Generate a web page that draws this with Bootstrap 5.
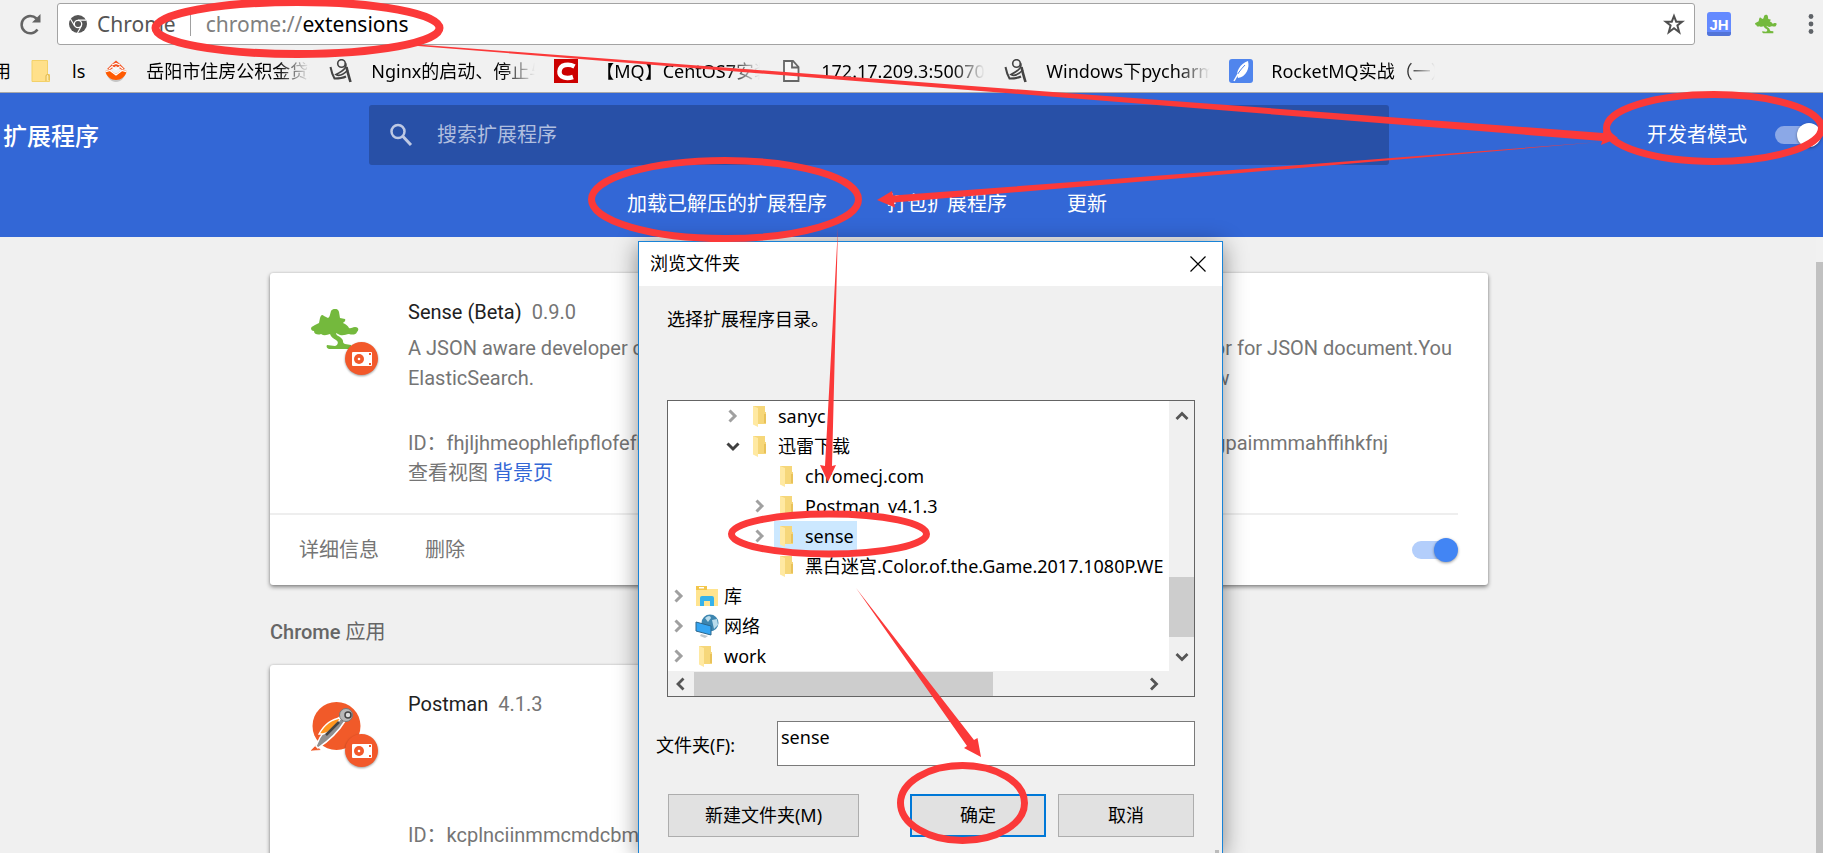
<!DOCTYPE html>
<html lang="zh-CN">
<head>
<meta charset="utf-8">
<meta name="viewport" content="width=device-width, initial-scale=1">
<title>扩展程序</title>
<link href="https://cdn.jsdelivr.net/npm/bootstrap@5.3.0/dist/css/bootstrap.min.css" rel="stylesheet">
<style>
  body { font-family: "Noto Sans", "Noto Sans CJK SC", sans-serif; font-size: 18px; line-height: 30px; background: #f0f0f0; color: #000; }
  button { font: inherit; }
  svg { display: block; flex: none; }
  .page { font-family: Roboto, "Noto Sans CJK SC", sans-serif; font-size: 20px; }

  /* browser chrome */
  .chrome-bar { background: #f1f1f1; border-bottom: 1px solid #a9a9a9; height: 93px; }
  .address-row { height: 48px; padding: 3px 0 3px 18px; }
  .omnibox { height: 42px; border: 1px solid #a3a3a3; border-radius: 3px; background: #fff; font-size: 21px; margin-left: 15px; padding: 0 9px 0 11px; }
  .omnibox .app-name { color: #555; margin-left: 10px; }
  .omnibox .rule { width: 1px; height: 24px; background: #a0a0a0; margin: 0 15px 0 14px; }
  .omnibox label { color: #808080; }
  .omnibox input { border: 0; padding: 0; outline: 0; min-width: 0; color: #000; }
  .ext-icons { padding-left: 12px; gap: 24px; }
  .bookmarks { height: 44px; gap: 19px; padding-top: 2px; white-space: nowrap; overflow: hidden; }
  .bookmark { display: flex; align-items: center; gap: 18px; color: #000; text-decoration: none; flex: none; }
  .bookmark .title { width: 164px; overflow: hidden; -webkit-mask-image: linear-gradient(90deg, #000 80%, transparent); mask-image: linear-gradient(90deg, #000 80%, transparent); }
  .bookmark-folder { gap: 20px; }
  .bookmark-folder .cut { margin-left: -7px; }
  .bookmark-folder .bookmark { gap: 21px; }

  /* extensions header */
  .ext-header { background: #3367d6; height: 144px; padding-top: 12px; color: #fff; }
  .ext-title { font-size: 24px; width: 369px; padding: 4px 0 0 3px; margin: 0; }
  .search-box { height: 60px; background: #2850a7; border-radius: 3px; padding-left: 20px; }
  .search-box input { background: none; border: 0; outline: 0; color: #fff; padding: 0 0 0 24px; }
  .search-box input::placeholder { color: #b0bedf; opacity: 1; }
  .dev-mode { width: 434px; gap: 28px; padding-right: 2px; }
  .tool-links { height: 72px; gap: 60px; padding: 6px 89px 0 0; }
  .text-btn { background: none; border: 0; padding: 0; color: inherit; }

  .toggle { appearance: none; width: 46px; height: 24px; margin: 0; position: relative; flex: none; }
  .toggle::before { content: ""; position: absolute; left: 0; top: 3px; width: 40px; height: 18px; border-radius: 9px; background: #b3cefb; }
  .toggle::after { content: ""; position: absolute; right: 0; top: 0; width: 24px; height: 24px; border-radius: 50%; background: #4285f4; box-shadow: 0 1px 3px rgba(0,0,0,.4); }
  .toggle-light::before { background: #8ba8e7; }
  .toggle-light::after { background: #fff; }

  /* extension cards */
  .ext-list { padding: 36px 335px 0 270px; color: #757575; }
  .ext-card { background: #fff; border-radius: 3px; height: 312px; box-shadow: 0 2px 4px rgba(0,0,0,.45), 0 0 2px rgba(0,0,0,.15); }
  .cards { gap: 18px; }
  .ext-info { height: 240px; padding: 24px 36px 0 36px; gap: 30px; }
  .ext-logo { width: 72px; padding: 12px 0 0 5px; }
  .ext-logo .badge-icon { left: 39px; top: 45px; filter: drop-shadow(0 1px 1px rgba(0,0,0,.4)); }
  .ext-head { gap: 10px; }
  .ext-name { color: #212121; font-size: 20px; line-height: 30px; margin: 0; font-weight: 400; }
  .ext-desc { height: 95px; margin: 6px 0 0; }
  .ext-link { color: #3367d6; }
  .ext-foot { border-top: 2px solid #eee; height: 72px; margin-right: 30px; padding-left: 29px; gap: 46px; }
  .section-title { font-size: 20px; line-height: 30px; font-weight: 500; color: #666; margin: 32px 0 18px; }
  .section-title span { font-weight: 400; }
  .page-scroll { right: 0; top: 237px; bottom: 0; width: 7px; background: #f1f1f1; padding-top: 25px; }
  .page-scroll div { background: #c1c1c1; height: 100%; }

  /* folder dialog */
  .folder-dialog { left: 638px; top: 241px; width: 585px; bottom: 0; border: 1px solid #1883d7; border-bottom: 0; background: #f0f0f0; box-shadow: 0 4px 22px rgba(0,0,0,.45); }
  .dlg-title { background: #fff; height: 44px; padding: 0 16px 0 11px; }
  .dlg-title h2 { font-size: 18px; margin: 0; font-weight: 400; }
  .dlg-body { padding: 18px 27px 0 28px; }
  .dlg-body p { height: 96px; margin: 0; }
  .tree-box { border: 1px solid #646464; background: #fff; }
  .tree { height: 270px; overflow: hidden; padding: 0; margin: 0; list-style: none; min-width: 0; }
  .tree li { display: flex; align-items: center; height: 30px; padding-left: 4px; white-space: nowrap; }
  .tree li.lv3 { padding-left: 58px; }
  .tree li.lv4 { padding-left: 85px; }
  .tree .twist { width: 14px; height: 14px; margin-right: 7px; flex: none; }
  .tree .node { display: flex; align-items: center; gap: 5px; padding: 0 3px 0 2px; height: 30px; }
  .tree .picked { background: #cce8ff; }
  .vscroll { width: 25px; background: #f0f0f0; height: 270px; padding: 9px 0 8px; }
  .vscroll .thumb { width: 100%; height: 60px; margin-top: auto; margin-bottom: 14px; background: #cdcdcd; }
  .hscroll { height: 25px; background: #f0f0f0; padding: 0 34px 0 6px; }
  .hscroll .thumb { width: 299px; height: 24px; margin-left: 6px; background: #cdcdcd; }
  .folder-row { margin: 24px 0 28px -11px; }
  .folder-row label { padding-top: 2px; }
  .folder-row input { width: 418px; height: 45px; border: 1px solid #7a7a7a; padding: 0 3px 14px; outline: 0; }
  .dlg-buttons { gap: 12px; padding: 0 1px; }
  .win-btn { height: 43px; width: 136px; background: #e1e1e1; border: 1px solid #adadad; padding: 0 0 2px; }
  .win-btn.wide { width: 191px; margin-right: auto; }
  .win-btn.primary { border: 2px solid #0078d7; }
  .grip { right: 3px; bottom: 0; width: 4px; height: 3px; background: #bbb; }
  .marks { left: 0; top: 0; pointer-events: none; }
</style>
</head>
<body>
<svg width="0" height="0" class="position-absolute" aria-hidden="true">
  <defs>
    <symbol id="folder" viewBox="0 0 24 24"><path d="M4 2h12v6h1v12H4z" fill="#f6d77a"/><path d="M4 2l5 2v19l-5-2.500z" fill="#ffe9a2"/><path d="M15 10h2v9h-2z" fill="#e9c25a"/></symbol>
    <symbol id="chev" viewBox="0 0 14 14"><path d="M3.500 1.500l5.500 5.500l-5.500 5.500" fill="none" stroke="#a0a0a0" stroke-width="3"/></symbol>
    <symbol id="bonsai" viewBox="0 0 48 40"><path fill="#74b93d" d="M0 19C1 17 3 17 4 16L8 14L9 9C10 6 11 5 13 7L17 9C19 8 19 5 20 2C22-1 27-1 28 3L29 9L34 10C35 12 33 13 32 14C35 15 37 17 38 19C40 20 41 18 44 18C48 18 48 21 46 23C45 26 41 26 38 25C35 25 33 27 29 26L25 24C25 27 29 27 31 30C33 32 31 34 34 35L40 36V40H18C16 39 15 38 16 36L24 37C27 36 28 33 25 31C22 29 20 28 19 25C16 26 13 27 10 25C8 26 3 26 3 22C1 22 0 21 0 19Z"/></symbol>
    <symbol id="appbadge" viewBox="0 0 33 33"><circle cx="16.500" cy="16.500" r="16.500" fill="#f2582a"/><rect x="7" y="10" width="20" height="14" rx="1" fill="#fff"/><circle cx="14" cy="17" r="5" fill="#f2582a"/><circle cx="14" cy="17" r="1.300" fill="#fff"/><path d="M24 11h2v2h-2zM24 21h2v2h-2z" fill="#f2582a"/></symbol>
    <symbol id="scribble" viewBox="0 0 24 24"><g fill="none" stroke="#444"><circle cx="12.500" cy="4.500" r="3.800" stroke-width="1.600"/><path d="M16.500 4C18 8 16 11 7 15.500C11 18 16 14 19 11" stroke-width="1.700"/><path d="M1.500 8C2.500 13 4 17 5.500 19.500C9 19.500 14 19 17 17.500" stroke-width="2"/><path d="M17.500 8C18.500 13 20 18 21.500 23" stroke-width="2.600"/></g></symbol>
  </defs>
</svg>

<div class="position-relative vh-100 overflow-hidden d-flex flex-column">
  <header class="chrome-bar flex-shrink-0">
    <div class="address-row d-flex align-items-center">
      <button class="text-btn" aria-label="重新加载"><svg width="24" height="24" viewBox="0 0 24 24"><path d="M19.500 17.500A8.700 8.700 0 1 1 18.500 6.500" fill="none" stroke="#646464" stroke-width="2.500"/><path d="M22.500 2v8.500H14z" fill="#646464"/></svg></button>
      <div class="omnibox d-flex align-items-center flex-fill">
        <svg width="18" height="18" viewBox="0 0 18 18"><circle cx="9" cy="9" r="9" fill="#555"/><circle cx="9" cy="9" r="3.700" fill="none" stroke="#fff" stroke-width="1.300"/><path d="M9 5.200h8M5.700 11L1.500 4M12.300 11L8.500 18" stroke="#fff" stroke-width="1.200" fill="none"/></svg>
        <span class="app-name">Chrome</span>
        <span class="rule"></span>
        <label for="url">chrome://</label>
        <input id="url" class="flex-fill" value="extensions">
        <svg width="22" height="22" viewBox="0 0 22 22"><path d="M11 3l2.200 5.700h6l-4.800 3.800l1.800 6.700L11 15.200l-5.200 4l1.800-6.700L2.800 8.700h6z" fill="none" stroke="#4f4f4f" stroke-width="2"/></svg>
      </div>
      <div class="ext-icons d-flex align-items-center">
        <svg width="24" height="24" viewBox="0 0 24 24"><rect width="24" height="24" rx="3" fill="#648aff"/><path d="M0 20h24v1a3 3 0 0 1-3 3H3a3 3 0 0 1-3-3z" fill="#5274d8"/><text x="12" y="18" text-anchor="middle" font-family="Liberation Sans" font-weight="700" font-size="15" fill="#fff">JH</text></svg>
        <svg width="22" height="20"><use href="#bonsai"/></svg>
        <button class="text-btn" aria-label="菜单"><svg width="22" height="24" viewBox="0 0 22 24"><g fill="#5f6368"><circle cx="10" cy="4.500" r="2.400"/><circle cx="10" cy="12" r="2.400"/><circle cx="10" cy="19.500" r="2.400"/></g></svg></button>
      </div>
    </div>
    <nav class="bookmarks d-flex align-items-center" aria-label="书签">
      <div class="d-flex align-items-center bookmark-folder">
        <a class="bookmark cut" href="#">用</a>
        <a class="bookmark" href="#"><svg width="20" height="22" viewBox="0 0 20 22"><path d="M1 .500h15.500v14h2v7H1z" fill="#ffe08a" stroke="#f3d169"/><path d="M15 21v-5q0-1.500 1.500-1.500T18 16v4" fill="#ffe9a8" stroke="#dfb649"/></svg>ls</a>
      </div>
      <a class="bookmark" href="#"><svg width="24" height="24" viewBox="0 0 24 24"><path d="M2 14l4 1 6 4 6-4 4-1c-2 5-5 9-10 9S4 19 2 14z" fill="#999" opacity=".5"/><path d="M1 12l5-1 6 4 6-4 5 1c-2 6-6 9-11 9S3 18 1 12z" fill="#ff5a00"/><path d="M12 1.500l4 3.500 5 5-3 1-6-4-6 4-3-1 5-5z" fill="#f4511e"/><path d="M1 13l5-1.500 6 4.500 6-4.500 5 1.500M5 10l3-2.500 4 3 4-3 3 2.500M8 6l4-1.500L16 6" stroke="#fff" stroke-width="1.200" fill="none"/></svg><span class="title">岳阳市住房公积金贷款</span></a>
      <a class="bookmark" href="#"><svg width="24" height="24"><use href="#scribble"/></svg><span class="title">Nginx的启动、停止与重启</span></a>
      <a class="bookmark" href="#"><svg width="24" height="24" viewBox="0 0 24 24"><path d="M0 0h24v24H0z" fill="#c00"/><path d="M20.500 7.500C15 4.500 6 5 5.500 12.500C5 19 13 20 19 18" fill="none" stroke="#fff" stroke-width="4.500"/></svg><span class="title">【MQ】CentOS7安装</span></a>
      <a class="bookmark" href="#"><svg width="24" height="24" viewBox="0 0 24 24"><path d="M5 2h9l5.500 6v14H5zM13 2v6.500h6.500" fill="#f8f8f8" stroke="#666" stroke-width="1.800"/></svg><span class="title">172.17.209.3:50070</span></a>
      <a class="bookmark" href="#"><svg width="24" height="24"><use href="#scribble"/></svg><span class="title">Windows下pycharm</span></a>
      <a class="bookmark" href="#"><svg width="24" height="24" viewBox="0 0 24 24"><rect width="24" height="24" rx="3" fill="#5085ed"/><path d="M19 2c2 7-2 16-10 17C6 13 11 5 19 2z" fill="#fff"/><path d="M5 22c2-5 6-11 11-16" stroke="#5085ed" fill="none"/><path d="M5 22l4-7" stroke="#fff" stroke-width="1.500"/></svg><span class="title">RocketMQ实战（一）</span></a>
    </nav>
  </header>

  <div class="page flex-fill">
    <div class="ext-header">
      <div class="d-flex align-items-center">
        <h1 class="ext-title">扩展程序</h1>
        <div class="search-box d-flex align-items-center flex-fill">
          <svg width="24" height="24" viewBox="0 0 24 24"><circle cx="9" cy="8.500" r="6.500" fill="none" stroke="#bec9e4" stroke-width="2.500"/><path d="M13.500 13l8.500 9" stroke="#bec9e4" stroke-width="3"/></svg>
          <input class="flex-fill" type="search" placeholder="搜索扩展程序" aria-label="搜索扩展程序">
        </div>
        <div class="dev-mode d-flex align-items-center justify-content-end">
          <label for="dev">开发者模式</label><input id="dev" class="toggle toggle-light" type="checkbox" checked>
        </div>
      </div>
      <div class="tool-links d-flex align-items-center justify-content-center">
        <button class="text-btn">加载已解压的扩展程序</button><button class="text-btn">打包扩展程序</button><button class="text-btn">更新</button>
      </div>
    </div>

    <main class="ext-list">
      <div class="cards d-flex">
        <article class="ext-card flex-fill w-50">
          <div class="ext-info d-flex">
            <div class="ext-logo position-relative flex-shrink-0">
              <svg width="48" height="40"><use href="#bonsai"/></svg>
              <svg class="badge-icon position-absolute" width="33" height="33"><use href="#appbadge"/></svg>
            </div>
            <div>
              <div class="d-flex ext-head"><h2 class="ext-name">Sense (Beta)</h2><span>0.9.0</span></div>
              <p class="ext-desc">A JSON aware developer console to ElasticSearch.</p>
              <div>ID：fhjljhmeophlefipflofefbjmdlpaocc</div>
              <div>查看视图 <a href="#" class="ext-link text-decoration-none">背景页</a></div>
            </div>
          </div>
          <div class="ext-foot d-flex align-items-center"><button class="text-btn">详细信息</button><button class="text-btn">删除</button></div>
        </article>
        <article class="ext-card flex-fill w-50">
          <div class="ext-info d-flex">
            <div class="ext-logo flex-shrink-0"></div>
            <div>
              <h2 class="ext-name">JSON-handle</h2>
              <p class="ext-desc text-nowrap">It's a browser and editor for JSON document.You<br>can get a beautiful view</p>
              <div>ID：iahnhfdhidomcpggpaimmmahffihkfnj</div>
            </div>
          </div>
          <div class="ext-foot d-flex align-items-center"><input class="toggle ms-auto" type="checkbox" checked aria-label="启用"></div>
        </article>
      </div>
      <h2 class="section-title">Chrome <span>应用</span></h2>
      <div class="cards d-flex">
        <article class="ext-card w-50">
          <div class="ext-info d-flex">
            <div class="ext-logo position-relative flex-shrink-0">
              <svg width="54" height="54" viewBox="2 1 54 54"><circle cx="27.500" cy="26" r="24" fill="#f15a29"/><path d="M1 51l6-6 5 5z" fill="#f15a29" stroke="#fff" stroke-width=".500"/><path d="M7 46C11 35 20 24 32 16l4 5C28 34 18 42 9 48z" fill="#8f8f8f" stroke="#fff" stroke-width="1.500"/><path d="M10 34C15 25 22 19 32 18C27 26 20 33 14 34z" fill="#ff951e" stroke="#fff" stroke-width="1.300"/><path d="M17 35L30 22" stroke="#444" stroke-width="2.500"/><circle cx="37" cy="15" r="6.500" fill="#b8b8b8" stroke="#777"/><circle cx="39" cy="15" r="3" fill="#ddd" stroke="#444" stroke-width="1.500"/></svg>
              <svg class="badge-icon position-absolute" width="33" height="33"><use href="#appbadge"/></svg>
            </div>
            <div>
              <div class="d-flex ext-head"><h2 class="ext-name">Postman</h2><span>4.1.3</span></div>
              <p class="ext-desc"></p>
              <div>ID：kcplnciinmmcmdcbmgaapbalehhoaaoo</div>
            </div>
          </div>
        </article>
      </div>
    </main>
  </div>
  <div class="page-scroll position-absolute"><div></div></div>

  <section class="folder-dialog position-absolute" role="dialog" aria-labelledby="dlgTitle">
    <div class="dlg-title d-flex align-items-center justify-content-between">
      <h2 id="dlgTitle">浏览文件夹</h2>
      <button class="text-btn" aria-label="关闭"><svg width="16" height="16" viewBox="0 0 16 16"><path d="M.5.5l15 15M15.500.5l-15 15" stroke="#000" stroke-width="1.200"/></svg></button>
    </div>
    <div class="dlg-body">
      <p>选择扩展程序目录。</p>
      <div class="tree-box">
        <div class="d-flex">
          <ul class="tree flex-fill">
            <li class="lv3"><svg class="twist"><use href="#chev"/></svg><span class="node"><svg width="24" height="24"><use href="#folder"/></svg>sanyc</span></li>
            <li class="lv3"><svg class="twist" viewBox="0 0 14 14"><path d="M1.500 4.500L7 10l5.500-5.500" fill="none" stroke="#404040" stroke-width="3"/></svg><span class="node"><svg width="24" height="24"><use href="#folder"/></svg>迅雷下载</span></li>
            <li class="lv4"><span class="twist"></span><span class="node"><svg width="24" height="24"><use href="#folder"/></svg>chromecj.com</span></li>
            <li class="lv4"><svg class="twist"><use href="#chev"/></svg><span class="node"><svg width="24" height="24"><use href="#folder"/></svg>Postman_v4.1.3</span></li>
            <li class="lv4"><svg class="twist"><use href="#chev"/></svg><span class="node picked"><svg width="24" height="24"><use href="#folder"/></svg>sense</span></li>
            <li class="lv4"><span class="twist"></span><span class="node"><svg width="24" height="24"><use href="#folder"/></svg>黑白迷宫.Color.of.the.Game.2017.1080P.WE</span></li>
            <li><svg class="twist"><use href="#chev"/></svg><span class="node"><svg width="24" height="24" viewBox="0 0 24 24"><path d="M1 2h11v3h11v17H1z" fill="#ffe48f"/><path d="M1 2h11v4H1z" fill="#f3c64a"/><path d="M4 3h5v1.500H4z" fill="#fff"/><path d="M5 22v-8q0-2 2-2h10q2 0 2 2v8h-4v-5H9v5z" fill="#35b2ea"/></svg>库</span></li>
            <li><svg class="twist"><use href="#chev"/></svg><span class="node"><svg width="24" height="24" viewBox="0 0 24 24"><circle cx="15" cy="9" r="8.500" fill="#3d86b0"/><path d="M10 4q5-4 6 0l-3 4zM17 6l5-1 1 6-4 4z" fill="#b9dcec"/><path d="M1 8l15 4v9L1 17z" fill="#35a5f2" stroke="#2b668c"/><path d="M6 20l7 2-3 2-5-2z" fill="#bfc8ce"/></svg>网络</span></li>
            <li><svg class="twist"><use href="#chev"/></svg><span class="node"><svg width="24" height="24"><use href="#folder"/></svg>work</span></li>
          </ul>
          <div class="vscroll d-flex flex-column align-items-center flex-shrink-0">
            <svg width="14" height="12" viewBox="0 0 14 12"><path d="M1.500 9L7 3.500L12.500 9" fill="none" stroke="#555" stroke-width="2.800"/></svg>
            <div class="thumb"></div>
            <svg width="14" height="12" viewBox="0 0 14 12"><path d="M1.500 3L7 8.500L12.500 3" fill="none" stroke="#555" stroke-width="2.800"/></svg>
          </div>
        </div>
        <div class="hscroll d-flex align-items-center">
          <svg width="14" height="14" viewBox="0 0 14 14"><path d="M9.500 1.500L4 7l5.500 5.500" fill="none" stroke="#555" stroke-width="2.800"/></svg>
          <div class="thumb"></div>
          <svg class="ms-auto" width="12" height="14" viewBox="0 0 12 14"><path d="M3 1.500L8.500 7L3 12.500" fill="none" stroke="#555" stroke-width="2.800"/></svg>
        </div>
      </div>
      <div class="folder-row d-flex align-items-center justify-content-between"><label for="folderName">文件夹(F):</label><input id="folderName" value="sense"></div>
      <div class="dlg-buttons d-flex"><button class="win-btn wide">新建文件夹(M)</button><button class="win-btn primary">确定</button><button class="win-btn">取消</button></div>
    </div>
    <div class="grip position-absolute"></div>
  </section>

  <!-- red hand-drawn step markers -->
  <svg class="marks position-absolute" width="1823" height="853" viewBox="0 0 1823 853" aria-hidden="true">
    <g fill="none" stroke="#fb3939" stroke-width="8">
      <ellipse cx="297.500" cy="28" rx="142" ry="26"/>
      <ellipse cx="725" cy="199.500" rx="133.500" ry="39" stroke-width="7"/>
      <ellipse cx="1714" cy="128" rx="107.500" ry="33.500" stroke-width="7"/>
      <ellipse cx="829" cy="534" rx="97.500" ry="20" stroke-width="7"/>
      <ellipse cx="962.500" cy="803" rx="62" ry="37.500" stroke-width="7"/>
    </g>
    <g fill="#fb3939">
      <path d="M418 44.500L1200 103L1603 133L1604 127L1618 138L1601 145L1602 141L1200 108.500L418 46z"/>
      <path d="M1600 142L1200 172.500L893 195.500L892 191L877 200L895 207.500L894 202.500L1200 176.500z"/>
      <path d="M838 226L825 466L820 465L828 482L836 465L832 466z"/>
      <path d="M856 588L967 746L964 748L981 757L977.500 738L974 740z"/>
    </g>
  </svg>
</div>
<script src="https://cdn.jsdelivr.net/npm/bootstrap@5.3.0/dist/js/bootstrap.bundle.min.js"></script>
</body>
</html>
